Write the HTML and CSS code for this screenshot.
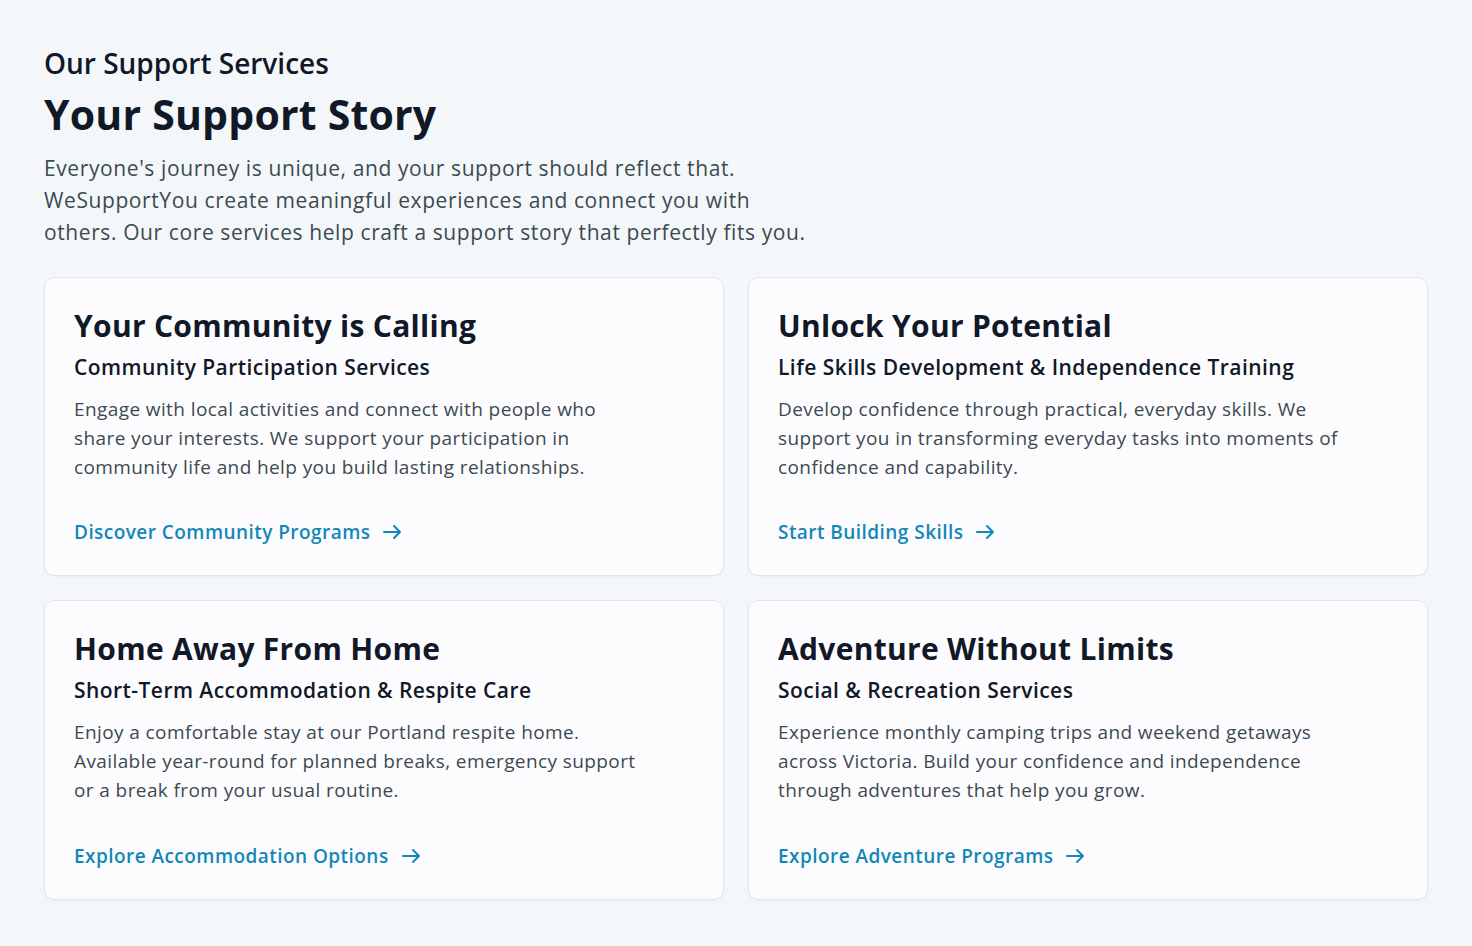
FILE: index.html
```html
<!DOCTYPE html>
<html lang="en">
<head>
<meta charset="utf-8">
<title>Our Support Services</title>
<link rel="stylesheet" href="styles.css">
</head>
<body>
<section class="services">
  <header class="intro">
    <p class="eyebrow">Our Support Services</p>
    <h1 class="headline">Your Support Story</h1>
    <p class="lead">Everyone's journey is unique, and your support should reflect that. WeSupportYou create meaningful experiences and connect you with others. Our core services help craft a support story that perfectly fits you.</p>
  </header>
  <div class="grid">
    <article class="card">
      <h2 class="card-title">Your Community is Calling</h2>
      <h3 class="card-sub">Community Participation Services</h3>
      <p class="card-text">Engage with local activities and connect with people who share your interests. We support your participation in community life and help you build lasting relationships.</p>
      <a class="card-link" href="#">Discover Community Programs <svg class="arrow" viewBox="0 0 20 20" width="20" height="20"><path d="M2 10h16M12 4l6 6-6 6" fill="none" stroke="currentColor" stroke-width="2" stroke-linecap="round" stroke-linejoin="round"/></svg></a>
    </article>
    <article class="card">
      <h2 class="card-title">Unlock Your Potential</h2>
      <h3 class="card-sub">Life Skills Development &amp; Independence Training</h3>
      <p class="card-text">Develop confidence through practical, everyday skills. We support you in transforming everyday tasks into moments of confidence and capability.</p>
      <a class="card-link" href="#">Start Building Skills <svg class="arrow" viewBox="0 0 20 20" width="20" height="20"><path d="M2 10h16M12 4l6 6-6 6" fill="none" stroke="currentColor" stroke-width="2" stroke-linecap="round" stroke-linejoin="round"/></svg></a>
    </article>
    <article class="card">
      <h2 class="card-title">Home Away From Home</h2>
      <h3 class="card-sub">Short-Term Accommodation &amp; Respite Care</h3>
      <p class="card-text">Enjoy a comfortable stay at our Portland respite home. Available year-round for planned breaks, emergency support or a break from your usual routine.</p>
      <a class="card-link" href="#">Explore Accommodation Options <svg class="arrow" viewBox="0 0 20 20" width="20" height="20"><path d="M2 10h16M12 4l6 6-6 6" fill="none" stroke="currentColor" stroke-width="2" stroke-linecap="round" stroke-linejoin="round"/></svg></a>
    </article>
    <article class="card">
      <h2 class="card-title">Adventure Without Limits</h2>
      <h3 class="card-sub">Social &amp; Recreation Services</h3>
      <p class="card-text">Experience monthly camping trips and weekend getaways across Victoria. Build your confidence and independence through adventures that help you grow.</p>
      <a class="card-link" href="#">Explore Adventure Programs <svg class="arrow" viewBox="0 0 20 20" width="20" height="20"><path d="M2 10h16M12 4l6 6-6 6" fill="none" stroke="currentColor" stroke-width="2" stroke-linecap="round" stroke-linejoin="round"/></svg></a>
    </article>
  </div>
</section>
</body>
</html>
```

FILE: styles.css
```css
* { box-sizing: border-box; }
html, body { margin: 0; padding: 0; }
body {
  background: #f4f7fa;
  font-family: "Open Sans", "Noto Sans", sans-serif;
  color: #111827;
}
.services {
  padding: 44px 44px 46px;
}
.intro { max-width: 780px; }
.eyebrow {
  margin: 0;
  font-size: 28px;
  line-height: 38px;
  font-weight: 600;
  color: #111827;
}
.headline {
  margin: 6px 0 0;
  font-size: 41px;
  line-height: 52px;
  font-weight: 700;
  letter-spacing: 0.2px;
  color: #111827;
}
.lead {
  margin: 12px 0 0;
  font-size: 21px;
  line-height: 32px;
  letter-spacing: 0.6px;
  color: #3c4a50;
  max-width: 772px;
}
.grid {
  margin-top: 29px;
  display: grid;
  grid-template-columns: 1fr 1fr;
  gap: 24px;
}
.card {
  background: #fcfcfe;
  border: 1px solid #e3e7ec;
  border-radius: 10px;
  padding: 30px 29px 29px;
  box-shadow: 0 1px 2px rgba(15, 23, 42, 0.04);
  display: flex;
  flex-direction: column;
  align-items: flex-start;
}
.card-title {
  margin: 0;
  font-size: 30px;
  line-height: 36px;
  font-weight: 700;
  letter-spacing: 0.3px;
  color: #111827;
}
.card-sub {
  margin: 9px 0 0;
  font-size: 21px;
  line-height: 28px;
  font-weight: 600;
  letter-spacing: 0.45px;
  color: #111827;
}
.card-text {
  margin: 14px 0 0;
  max-width: 575px;
  font-size: 19px;
  line-height: 28.8px;
  letter-spacing: 0.4px;
  color: #3c4a50;
}
.card-link {
  margin-top: 37px;
  display: inline-flex;
  align-items: center;
  gap: 12px;
  font-size: 19px;
  line-height: 28px;
  font-weight: 600;
  letter-spacing: 0.45px;
  color: #1387b6;
  text-decoration: none;
}
.arrow { display: block; }
```
